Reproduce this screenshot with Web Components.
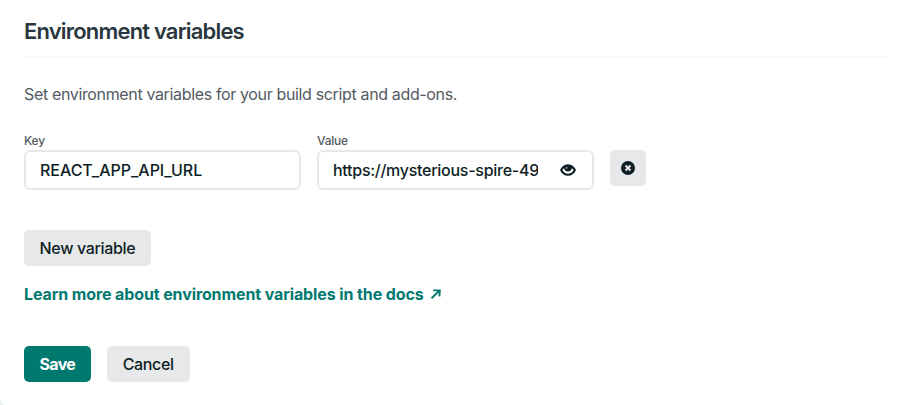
<!DOCTYPE html>
<html lang="en"><head><meta charset="utf-8"><title>Environment variables</title>
<style>
html,body{margin:0;background:#e6eeee}
body{font:500 16px/24px Inter,sans-serif;color:#0e1e25;width:904px;height:405px;overflow:hidden}
</style></head><body>
<env-card>
 <span slot="title">Environment variables</span>
 <span slot="intro">Set environment variables for your build script and add-ons.</span>
 <env-row>
  <env-field label="Key" value="REACT_APP_API_URL"></env-field>
  <env-field label="Value" value="https://mysterious-spire-49" secret></env-field>
  <env-button icon aria-label="Remove"><svg width="16" height="16" viewBox="0 0 16 16"><circle cx="8" cy="8" r="7" fill="#0e1e25"/><path d="M5.5 5.5l5 5M10.5 5.5l-5 5" stroke="#e7e8ea" stroke-width="2"/></svg></env-button>
 </env-row>
 <env-button class="new">New variable</env-button>
 <env-link>Learn more about environment variables in the docs</env-link>
 <env-button slot="actions" primary>Save</env-button>
 <env-button slot="actions" class="cancel">Cancel</env-button>
</env-card>
<script>
const define=(name,html,setup)=>customElements.define(name,class extends HTMLElement{
 constructor(){super();const t=document.createElement('template');t.innerHTML=html;this.attachShadow({mode:'open'}).append(t.content.cloneNode(true));}
 connectedCallback(){if(setup)setup(this,this.shadowRoot)}
});
define('env-card',`<style>
:host{display:block;box-sizing:border-box;height:405px;padding:16px 16px 0 24px;background:#fff;border-bottom-left-radius:6px}
header{height:40px;border-bottom:2px solid #f7f8f8}
h2{margin:0;font-size:22px;line-height:30px;font-weight:600;letter-spacing:-.82px;color:#2a373e}
p{margin:24px 0 27px;font-weight:400;letter-spacing:-.353px;color:#545a61}
.body{display:flex;flex-direction:column;align-items:flex-start}
::slotted(.new){margin-top:40px}
::slotted(.cancel){width:83px}
footer{display:flex;gap:16px;margin-top:40px}
</style><header><h2><slot name="title"></slot></h2></header><p><slot name="intro"></slot></p><div class="body"><slot></slot></div><footer><slot name="actions"></slot></footer>`);
define('env-row',`<style>:host{display:flex;gap:16px;align-items:flex-start}::slotted(env-button){margin-top:17px}</style><slot></slot>`);
define('env-field',`<style>
:host{display:block;width:277px}
label{display:block;font-size:12px;line-height:16px;height:17px;letter-spacing:-.2px;color:#545a61}
.box{box-sizing:border-box;height:40px;border:2px solid #e7e8ea;border-radius:6px;padding:0 14px;display:flex;align-items:center;justify-content:space-between}
span{white-space:nowrap;letter-spacing:-.04px}
:host([secret]) span{letter-spacing:-.27px;width:205px;overflow:hidden}
svg{display:none}:host([secret]) svg{display:block}
</style><label></label><div class="box"><span></span><svg width="20" height="20" viewBox="0 0 20 20"><path fill="#0e1e25" fill-rule="evenodd" d="M2 10C3.6 6.4 6.5 4.2 10 4.2S16.4 6.4 18 10C16.4 13.8 13.5 15.8 10 15.8S3.6 13.8 2 10ZM6.2 8.3C5.4 8.7 4.8 9.3 4.4 10C5.7 12.5 7.6 13.8 10 13.8S14.3 12.5 15.6 10C15.2 9.3 14.6 8.7 13.8 8.3C13.4 10.4 12.1 11.5 10 11.5S6.6 10.4 6.2 8.3Z"/><circle cx="8.6" cy="7.9" r=".8" fill="#b8bec1"/></svg></div>`,
(e,r)=>{r.querySelector('label').textContent=e.getAttribute('label');r.querySelector('span').textContent=e.getAttribute('value')});
define('env-button',`<style>
:host{display:inline-flex;box-sizing:border-box;height:36px;padding:0 15.6px;border-radius:5px;background:#e7e8ea;align-items:center;justify-content:center;letter-spacing:-.34px}
:host([icon]){width:36px;padding:0}
:host([primary]){background:#007a6f;color:#fff;font-weight:700;letter-spacing:-.7px}
</style><slot></slot>`);
define('env-link',`<style>:host{display:flex;align-items:center;gap:6px;margin-top:16px;font-weight:700;letter-spacing:-.11px;color:#007a6f}</style><span><slot></slot></span><svg width="12" height="12" viewBox="0 0 12 12"><path d="M1.5 10.2l8-7.6M3.2 2.4h6.6l-.4 6" fill="none" stroke="currentColor" stroke-width="1.9"/></svg>`);
</script></body></html>
